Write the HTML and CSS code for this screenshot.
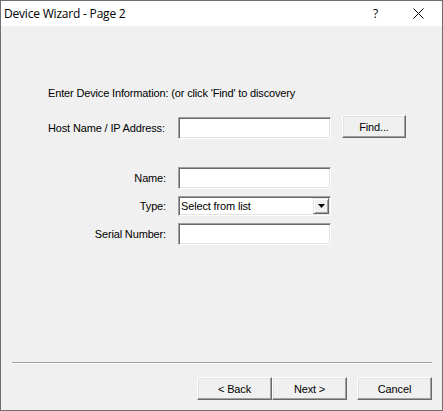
FILE: index.html
```html
<!DOCTYPE html>
<html>
<head>
<meta charset="utf-8">
<link rel="stylesheet" href="styles.css">
</head>
<body>
<div class="window">
  <div class="titlebar">
    <span class="title">Device Wizard - Page 2</span>
    <span class="help">?</span>
    <span class="close"><svg width="11" height="11" viewBox="0 0 11 11"><path d="M0.5 0.5 L10.5 10.5 M10.5 0.5 L0.5 10.5" stroke="#000" stroke-width="1" fill="none"/></svg></span>
  </div>
  <div class="content">
    <div class="intro">Enter Device Information: (or click 'Find' to discovery</div>
    <div class="host-row">
      <span class="label left">Host Name / IP Address:</span>
      <span class="field host-field"></span>
      <span class="btn find-btn">Find...</span>
    </div>
    <div class="fields">
      <span class="label">Name:</span>
      <span class="field"></span>
      <span class="label">Type:</span>
      <span class="field combo"><span class="combo-text">Select from list</span><span class="combo-btn"><svg width="7" height="4" viewBox="0 0 7 4"><path d="M0 0 H7 L3.5 4 Z" fill="#000"/></svg></span></span>
      <span class="label">Serial Number:</span>
      <span class="field"></span>
    </div>
  </div>
  <div class="footer">
    <div class="separator"></div>
    <div class="buttons">
      <span class="btn nav-btn">&lt; Back</span>
      <span class="btn nav-btn">Next &gt;</span>
      <span class="btn nav-btn cancel">Cancel</span>
    </div>
  </div>
</div>
</body>
</html>
```
FILE: styles.css
```css
* { box-sizing: border-box; }
html, body { margin: 0; padding: 0; }
body { width: 443px; height: 411px; overflow: hidden; background: #f0f0f0; }

.window {
  width: 443px;
  height: 411px;
  border: 1px solid #6f6f6f;
  background: #f0f0f0;
  display: flex;
  flex-direction: column;
  font-family: "Liberation Sans", Arial, sans-serif;
  font-size: 11px;
  letter-spacing: -0.15px;
  color: #000;
}

.titlebar {
  height: 25px;
  background: #fff;
  display: flex;
  align-items: center;
  flex: none;
  letter-spacing: 0;
}
.title {
  font-family: "Open Sans", "Noto Sans", sans-serif;
  font-size: 12px;
  margin-left: 3px;
  letter-spacing: -0.2px;
  flex: 1;
}
.help {
  font-family: "Open Sans", "Noto Sans", sans-serif;
  font-size: 12px;
  width: 10px;
  margin-right: 30px;
}
.close {
  width: 11px;
  height: 11px;
  margin-right: 18px;
  display: flex;
}

.content {
  padding-left: 47px;
}
.intro {
  margin-top: 60px;
  line-height: 14px;
  height: 14px;
  white-space: nowrap;
}

.host-row {
  margin-top: 15px;
  display: flex;
  height: 24px;
}
.label {
  width: 118px;
  flex: none;
  white-space: nowrap;
  text-align: right;
  line-height: 14px;
}
.host-row .label {
  text-align: left;
  margin-top: 6px;
}
.field {
  display: block;
  flex: none;
  width: 153px;
  height: 22px;
  background: #fff;
  border-top: 1px solid #a0a0a0;
  border-left: 1px solid #a0a0a0;
  border-right: 1px solid #fff;
  border-bottom: 1px solid #fff;
  box-shadow: inset 1px 1px 0 #696969, inset -1px -1px 0 #e3e3e3;
}
.host-field {
  margin-left: 12px;
  margin-top: 2px;
}
.btn {
  display: flex;
  flex: none;
  align-items: center;
  justify-content: center;
  background: #f0f0f0;
  border-top: 1px solid #fff;
  border-left: 1px solid #fff;
  border-right: 1px solid #696969;
  border-bottom: 1px solid #696969;
  box-shadow: inset -1px -1px 0 #a0a0a0, inset 1px 1px 0 #e3e3e3;
  height: 23px;
}
.find-btn {
  width: 64px;
  margin-left: 11px;
  height: 23px;
}

.fields {
  margin-top: 28px;
  display: grid;
  grid-template-columns: 118px 153px;
  grid-template-rows: 22px 20px 22px;
  column-gap: 12px;
  row-gap: 7px;
  align-items: center;
}
.combo {
  display: flex;
  align-items: center;
  padding-left: 2px;
  height: 20px;
}
.combo-text { flex: 1; }
.combo-btn {
  width: 16px;
  height: 16px;
  margin-right: 1px;
  display: flex;
  align-items: center;
  justify-content: center;
  background: #f0f0f0;
  border-top: 1px solid #e3e3e3;
  border-left: 1px solid #e3e3e3;
  border-right: 1px solid #696969;
  border-bottom: 1px solid #696969;
  box-shadow: inset 1px 1px 0 #fff, inset -1px -1px 0 #a0a0a0;
}

.footer {
  margin-top: auto;
  padding: 0 10px 10px 11px;
}
.separator {
  height: 2px;
  border-top: 1px solid #a0a0a0;
  border-bottom: 1px solid #fff;
}
.buttons {
  margin-top: 13px;
  display: flex;
  justify-content: flex-end;
}
.nav-btn {
  width: 75px;
}
.cancel {
  margin-left: 10px;
}
```
